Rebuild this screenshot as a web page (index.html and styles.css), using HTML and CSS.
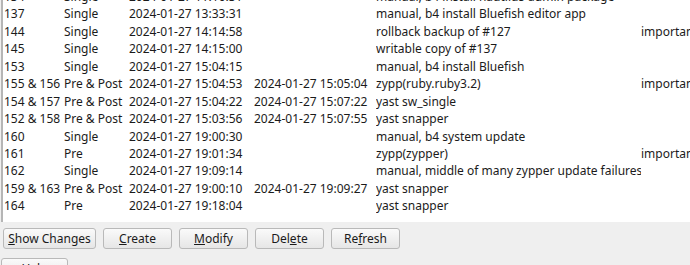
FILE: index.html
```html
<!DOCTYPE html>
<html lang="en">
<head>
    <meta charset="UTF-8">
    <title>Snapper</title>
    <link rel="stylesheet" href="styles.css">
</head>
<body>
    <div class="list">
        <div class="rows">
            <div class="row"><span>134</span><span>Single</span><span>2024-01-27 11:16:31</span><span></span><span>manual, b4 install nautilus-admin package</span><span></span></div>
            <div class="row"><span>137</span><span>Single</span><span>2024-01-27 13:33:31</span><span></span><span>manual, b4 install Bluefish editor app</span><span></span></div>
            <div class="row"><span>144</span><span>Single</span><span>2024-01-27 14:14:58</span><span></span><span>rollback backup of #127</span><span>important</span></div>
            <div class="row"><span>145</span><span>Single</span><span>2024-01-27 14:15:00</span><span></span><span>writable copy of #137</span><span></span></div>
            <div class="row"><span>153</span><span>Single</span><span>2024-01-27 15:04:15</span><span></span><span>manual, b4 install Bluefish</span><span></span></div>
            <div class="row"><span>155 &amp; 156</span><span>Pre &amp; Post</span><span>2024-01-27 15:04:53</span><span>2024-01-27 15:05:04</span><span>zypp(ruby.ruby3.2)</span><span>important</span></div>
            <div class="row"><span>154 &amp; 157</span><span>Pre &amp; Post</span><span>2024-01-27 15:04:22</span><span>2024-01-27 15:07:22</span><span>yast sw_single</span><span></span></div>
            <div class="row"><span>152 &amp; 158</span><span>Pre &amp; Post</span><span>2024-01-27 15:03:56</span><span>2024-01-27 15:07:55</span><span>yast snapper</span><span></span></div>
            <div class="row"><span>160</span><span>Single</span><span>2024-01-27 19:00:30</span><span></span><span>manual, b4 system update</span><span></span></div>
            <div class="row"><span>161</span><span>Pre</span><span>2024-01-27 19:01:34</span><span></span><span>zypp(zypper)</span><span>important</span></div>
            <div class="row"><span>162</span><span>Single</span><span>2024-01-27 19:09:14</span><span></span><span>manual, middle of many zypper update failures</span><span></span></div>
            <div class="row"><span>159 &amp; 163</span><span>Pre &amp; Post</span><span>2024-01-27 19:00:10</span><span>2024-01-27 19:09:27</span><span>yast snapper</span><span></span></div>
            <div class="row"><span>164</span><span>Pre</span><span>2024-01-27 19:18:04</span><span></span><span>yast snapper</span><span></span></div>
        </div>
    </div>
    <div class="actions">
        <button><u>S</u>how Changes</button>
        <button><u>C</u>reate</button>
        <button><u>M</u>odify</button>
        <button>Del<u>e</u>te</button>
        <button>Re<u>f</u>resh</button>
    </div>
    <div class="footer">
        <button class="help"><u>H</u>elp</button>
    </div>
</body>
</html>
```

FILE: styles.css
```css
html, body {
    margin: 0;
    padding: 0;
    width: 690px;
    height: 265px;
    overflow: hidden;
    background-color: #efefef;
    font-family: "Noto Sans", sans-serif;
    font-size: 12px;
    color: #1b1b1b;
}
.list {
    height: 222px;
    margin-left: 1px;
    border-left: 2px solid #b5b5b5;
    background-color: #fff;
    overflow: hidden;
}
.rows {
    margin-top: -12px;
}
.row {
    display: grid;
    grid-template-columns: 60px 65px 125px 122px 265px 1fr;
    height: 17.45px;
    line-height: 17.45px;
    padding-left: 1px;
    white-space: nowrap;
}
.row span {
    overflow: hidden;
}
.actions {
    display: flex;
    gap: 7px;
    padding: 6px 0 0 3px;
}
button {
    height: 21px;
    padding: 0;
    font-family: "Noto Sans", sans-serif;
    font-size: 12px;
    color: #1b1b1b;
    white-space: nowrap;
    background: linear-gradient(#fafafa, #e6e6e6);
    border: 1px solid #b9b9b9;
    border-radius: 3px;
    line-height: 19px;
}
.actions button {
    width: 69px;
}
.actions button:first-child {
    width: 93px;
}
.footer {
    height: 7px;
    padding: 9px 0 0 1px;
    overflow: hidden;
}
.help {
    width: 67px;
    vertical-align: top;
}
```
